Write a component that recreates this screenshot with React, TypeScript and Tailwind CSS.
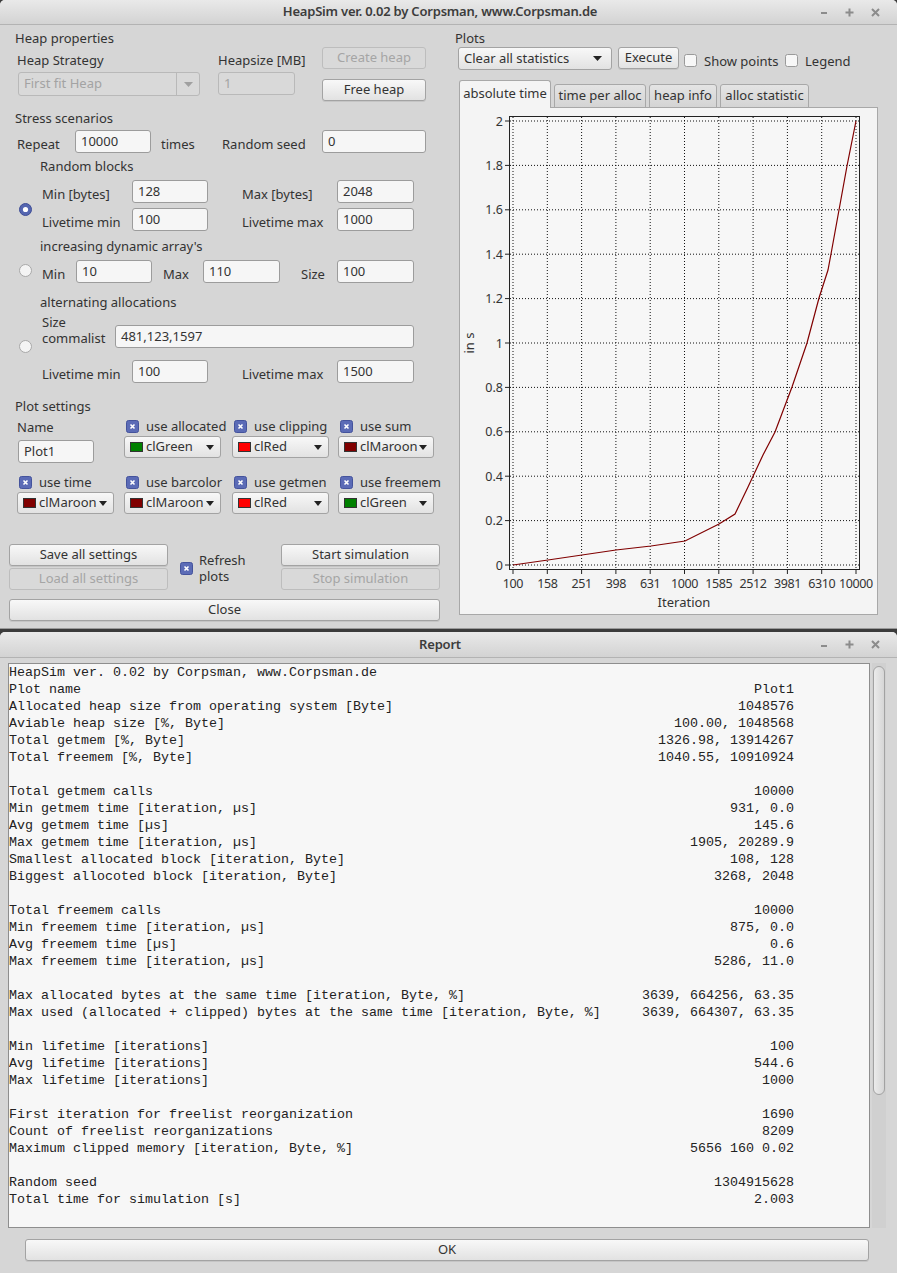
import type { ReactNode } from "react";

const UI = "font-['Noto_Sans',sans-serif]";
const MONO = "font-['Liberation_Mono',monospace]";

const report: [string, string][] = [
  ["HeapSim ver. 0.02 by Corpsman, www.Corpsman.de", ""],
  ["Plot name", "Plot1"],
  ["Allocated heap size from operating system [Byte]", "1048576"],
  ["Aviable heap size [%, Byte]", "100.00, 1048568"],
  ["Total getmem [%, Byte]", "1326.98, 13914267"],
  ["Total freemem [%, Byte]", "1040.55, 10910924"],
  ["", ""],
  ["Total getmem calls", "10000"],
  ["Min getmem time [iteration, µs]", "931, 0.0"],
  ["Avg getmem time [µs]", "145.6"],
  ["Max getmem time [iteration, µs]", "1905, 20289.9"],
  ["Smallest allocated block [iteration, Byte]", "108, 128"],
  ["Biggest allocoted block [iteration, Byte]", "3268, 2048"],
  ["", ""],
  ["Total freemem calls", "10000"],
  ["Min freemem time [iteration, µs]", "875, 0.0"],
  ["Avg freemem time [µs]", "0.6"],
  ["Max freemem time [iteration, µs]", "5286, 11.0"],
  ["", ""],
  ["Max allocated bytes at the same time [iteration, Byte, %]", "3639, 664256, 63.35"],
  ["Max used (allocated + clipped) bytes at the same time [iteration, Byte, %]", "3639, 664307, 63.35"],
  ["", ""],
  ["Min lifetime [iterations]", "100"],
  ["Avg lifetime [iterations]", "544.6"],
  ["Max lifetime [iterations]", "1000"],
  ["", ""],
  ["First iteration for freelist reorganization", "1690"],
  ["Count of freelist reorganizations", "8209"],
  ["Maximum clipped memory [iteration, Byte, %]", "5656 160 0.02"],
  ["", ""],
  ["Random seed", "1304915628"],
  ["Total time for simulation [s]", "2.003"],
];

function Label({ children, className = "" }: { children: ReactNode; className?: string }) {
  return <div className={`h-[16px] shrink-0 whitespace-nowrap leading-[16px] ${className}`}>{children}</div>;
}

function Btn({ w, children, disabled, className = "" }: { w: string; children: ReactNode; disabled?: boolean; className?: string }) {
  return (
    <div
      className={`flex h-[22px] shrink-0 items-center justify-center rounded-[3px] border text-[13px] ${w} ${
        disabled
          ? "border-[#bdbdbd] bg-[#d9d9d9] text-[#a5a5a5]"
          : "border-[#a3a3a3] bg-linear-to-b from-[#f8f8f8] to-[#e2e2e2] text-[#333] shadow-[0_1px_0_rgba(0,0,0,0.08)]"
      } ${className}`}
    >
      {children}
    </div>
  );
}

function Input({ w, value, disabled, className = "" }: { w: string; value: string; disabled?: boolean; className?: string }) {
  return (
    <div
      className={`flex h-[23px] shrink-0 items-center rounded-[3px] border pl-[5px] ${w} ${
        disabled ? "border-[#b9b9b9] bg-[#d9d9d9] text-[#a3a3a3]" : "border-[#9c9c9c] bg-[#f6f6f6] text-[#333]"
      } ${className}`}
    >
      {value}
    </div>
  );
}

function Tri({ color = "#222", w = 9 }: { color?: string; w?: number }) {
  return (
    <svg width={w} height="5" viewBox={`0 0 ${w} 5`} className="shrink-0">
      <polygon points={`0,0 ${w},0 ${w / 2},5`} fill={color} />
    </svg>
  );
}

function Check({ checked }: { checked?: boolean }) {
  return (
    <svg width="13" height="13" viewBox="0 0 13 13" className="shrink-0">
      {checked ? (
        <>
          <rect x="0.5" y="0.5" width="12" height="12" rx="2" fill="#5b6bb6" stroke="#44539c" />
          <path d="M4.5 4.5 L8.5 8.5 M8.5 4.5 L4.5 8.5" stroke="#fff" strokeWidth="1.6" />
        </>
      ) : (
        <rect x="0.5" y="0.5" width="12" height="12" rx="2" fill="#f7f7f7" stroke="#9a9a9a" />
      )}
    </svg>
  );
}

function Radio({ checked }: { checked?: boolean }) {
  return (
    <svg width="13" height="13" viewBox="0 0 13 13" className="shrink-0">
      {checked ? (
        <>
          <circle cx="6.5" cy="6.5" r="6" fill="#5566b0" stroke="#3e4d96" />
          <circle cx="6.5" cy="6.5" r="2.6" fill="#fff" />
        </>
      ) : (
        <circle cx="6.5" cy="6.5" r="6" fill="#f4f4f4" stroke="#a8a8a8" />
      )}
    </svg>
  );
}

function ColorCombo({ w, swatch, label, className = "" }: { w: string; swatch: string; label: string; className?: string }) {
  return (
    <div
      className={`flex h-[22px] shrink-0 items-center rounded-[3px] border border-[#a3a3a3] bg-linear-to-b from-[#f8f8f8] to-[#e2e2e2] pl-[5px] pr-[6px] text-[#333] ${w} ${className}`}
    >
      <span className={`h-[10px] w-[13px] shrink-0 border border-[#333] ${swatch}`} />
      <span className="ml-[3px] min-w-0 flex-1 overflow-hidden whitespace-nowrap">{label}</span>
      <Tri w={8} />
    </div>
  );
}

function CheckLabel({ text, className = "" }: { text: string; className?: string }) {
  return (
    <div className={`flex h-[16px] items-center ${className}`}>
      <Check checked />
      <span className="ml-[7px] whitespace-nowrap leading-[16px]">{text}</span>
    </div>
  );
}

function WinControls() {
  return (
    <div className="flex flex-1 items-center justify-end gap-[17px] pr-[17px]">
      <svg width="8" height="8" viewBox="0 0 8 8">
        <path d="M1 5 H7" stroke="#8c8c8c" strokeWidth="2" />
      </svg>
      <svg width="9" height="9" viewBox="0 0 9 9">
        <path d="M4.5 0.5 V8.5 M0.5 4.5 H8.5" stroke="#8c8c8c" strokeWidth="2" />
      </svg>
      <svg width="9" height="9" viewBox="0 0 9 9">
        <path d="M1 1 L8 8 M8 1 L1 8" stroke="#8c8c8c" strokeWidth="2" />
      </svg>
    </div>
  );
}

function TitleBar({ title, h }: { title: string; h: string }) {
  return (
    <div className={`flex shrink-0 items-center rounded-t-[5px] border-b border-[#b3b3b3] bg-linear-to-b from-[#e9e9e9] to-[#d3d3d3] ${h}`}>
      <div className="flex-1" />
      <span className="text-[13px] font-semibold tracking-[-0.2px] text-[#3c3c3c]">{title}</span>
      <WinControls />
    </div>
  );
}

function FieldRow({ left, leftVal, right, rightVal, className = "" }: { left: string; leftVal: string; right: string; rightVal: string; className?: string }) {
  return (
    <div className={`flex items-start ${className}`}>
      <Label className="mt-[6px] w-[90px]">{left}</Label>
      <Input w="w-[76px]" value={leftVal} />
      <Label className="ml-[34px] mt-[6px] w-[95px]">{right}</Label>
      <Input w="w-[77px]" value={rightVal} />
    </div>
  );
}

function LeftPanel() {
  return (
    <div className="flex w-[450px] shrink-0 flex-col">
      <div className="flex">
        <div className="flex w-[310px] flex-col">
          <Label className="ml-[15px] mt-[5px]">Heap properties</Label>
          <div className="mt-[6px] flex">
            <Label className="ml-[17px] w-[201px]">Heap Strategy</Label>
            <Label>Heapsize [MB]</Label>
          </div>
          <div className="mt-[4px] flex">
            <div className="ml-[18px] flex h-[24px] w-[182px] rounded-[3px] border border-[#b9b9b9] bg-[#d9d9d9] text-[#a3a3a3]">
              <div className="flex flex-1 items-center border-r border-[#b9b9b9] pl-[5px]">First fit Heap</div>
              <div className="flex w-[22px] items-center justify-center">
                <Tri color="#a0a0a0" />
              </div>
            </div>
            <Input w="w-[77px]" value="1" disabled className="ml-[18px]" />
          </div>
        </div>
        <div className="ml-[12px] flex flex-col">
          <Btn w="w-[104px]" disabled className="mt-[22px]">Create heap</Btn>
          <Btn w="w-[104px]" className="mt-[10px]">Free heap</Btn>
        </div>
      </div>

      <Label className="ml-[15px] mt-[9px]">Stress scenarios</Label>
      <div className="mt-[4px] flex items-start">
        <Label className="ml-[17px] mt-[6px] w-[58px]">Repeat</Label>
        <Input w="w-[76px]" value="10000" />
        <Label className="ml-[10px] mt-[6px] w-[61px]">times</Label>
        <Label className="mt-[6px] w-[100px]">Random seed</Label>
        <Input w="w-[104px]" value="0" />
      </div>

      <Label className="ml-[40px] mt-[5px]">Random blocks</Label>
      <div className="mt-[6px] flex items-start">
        <div className="ml-[19px] mt-[23px]">
          <Radio checked />
        </div>
        <div className="ml-[10px] flex flex-col">
          <FieldRow left="Min [bytes]" leftVal="128" right="Max [bytes]" rightVal="2048" />
          <FieldRow left="Livetime min" leftVal="100" right="Livetime max" rightVal="1000" className="mt-[5px]" />
        </div>
      </div>

      <Label className="ml-[40px] mt-[7px]">increasing dynamic array's</Label>
      <div className="mt-[6px] flex items-start">
        <div className="ml-[19px] mt-[4px]">
          <Radio />
        </div>
        <Label className="ml-[10px] mt-[6px] w-[34px]">Min</Label>
        <Input w="w-[76px]" value="10" />
        <Label className="ml-[11px] mt-[6px] w-[40px]">Max</Label>
        <Input w="w-[77px]" value="110" />
        <Label className="ml-[21px] mt-[6px] w-[36px]">Size</Label>
        <Input w="w-[77px]" value="100" />
      </div>

      <Label className="ml-[40px] mt-[11px]">alternating allocations</Label>
      <div className="mt-[4px] flex items-start">
        <div className="ml-[19px] mt-[26px]">
          <Radio />
        </div>
        <div className="ml-[10px] flex flex-col">
          <div className="flex items-start">
            <div className="w-[73px] leading-[16px]">
              Size
              <br />
              commalist
            </div>
            <Input w="w-[299px]" value="481,123,1597" className="mt-[11px]" />
          </div>
          <FieldRow left="Livetime min" leftVal="100" right="Livetime max" rightVal="1500" className="mt-[12px]" />
        </div>
      </div>

      <Label className="ml-[15px] mt-[15px]">Plot settings</Label>
      <div className="flex items-start">
        <div className="ml-[17px] flex w-[107px] shrink-0 flex-col">
          <Label className="mt-[5px]">Name</Label>
          <Input w="w-[76px]" value="Plot1" className="ml-[1px] mt-[5px] h-[22px]" />
        </div>
        <div className="mt-[4px] flex w-[108px] shrink-0 flex-col">
          <CheckLabel text="use allocated" className="ml-[2px]" />
          <ColorCombo w="w-[97px]" swatch="bg-[#008000]" label="clGreen" className="mt-[2px]" />
        </div>
        <div className="mt-[4px] flex w-[106px] shrink-0 flex-col">
          <CheckLabel text="use clipping" className="ml-[2px]" />
          <ColorCombo w="w-[97px]" swatch="bg-[#ff0000]" label="clRed" className="mt-[2px]" />
        </div>
        <div className="mt-[4px] flex w-[100px] shrink-0 flex-col">
          <CheckLabel text="use sum" className="ml-[2px]" />
          <ColorCombo w="w-[96px]" swatch="bg-[#800000]" label="clMaroon" className="mt-[2px]" />
        </div>
      </div>
      <div className="mt-[11px] flex items-start">
        <div className="ml-[17px] flex w-[107px] shrink-0 flex-col">
          <CheckLabel text="use time" className="ml-[2px]" />
          <ColorCombo w="w-[97px]" swatch="bg-[#800000]" label="clMaroon" className="mt-[2px]" />
        </div>
        <div className="flex w-[108px] shrink-0 flex-col">
          <CheckLabel text="use barcolor" className="ml-[2px]" />
          <ColorCombo w="w-[97px]" swatch="bg-[#800000]" label="clMaroon" className="mt-[2px]" />
        </div>
        <div className="flex w-[106px] shrink-0 flex-col">
          <CheckLabel text="use getmen" className="ml-[2px]" />
          <ColorCombo w="w-[97px]" swatch="bg-[#ff0000]" label="clRed" className="mt-[2px]" />
        </div>
        <div className="flex w-[100px] shrink-0 flex-col">
          <CheckLabel text="use freemem" className="ml-[2px]" />
          <ColorCombo w="w-[96px]" swatch="bg-[#008000]" label="clGreen" className="mt-[2px]" />
        </div>
      </div>

      <div className="mt-[30px] flex items-start">
        <div className="ml-[9px] flex flex-col">
          <Btn w="w-[159px]">Save all settings</Btn>
          <Btn w="w-[159px]" disabled className="mt-[2px]">Load all settings</Btn>
        </div>
        <div className="flex w-[113px] items-start">
          <div className="ml-[12px] mt-[18px]">
            <Check checked />
          </div>
          <div className="ml-[6px] mt-[8px] leading-[16px]">
            Refresh
            <br />
            plots
          </div>
        </div>
        <div className="flex flex-col">
          <Btn w="w-[159px]">Start simulation</Btn>
          <Btn w="w-[159px]" disabled className="mt-[2px]">Stop simulation</Btn>
        </div>
      </div>
      <Btn w="w-[431px]" className="ml-[9px] mt-[9px]">Close</Btn>
    </div>
  );
}

const xTicks = ["100", "158", "251", "398", "631", "1000", "1585", "2512", "3981", "6310", "10000"];
const yTicks = ["0", "0.2", "0.4", "0.6", "0.8", "1", "1.2", "1.4", "1.6", "1.8", "2"];
const curve: [number, number][] = [
  [513, 565], [548, 560], [616, 550], [651, 546], [685, 541], [719, 524], [735, 514], [748, 487],
  [763, 455], [775, 432], [792, 387], [807, 343], [819, 298], [828, 270], [831, 254], [839, 210], [847, 166], [856, 121],
];

function Chart() {
  const gx = (i: number) => 513 + i * 34.3;
  const gy = (j: number) => 565 - j * 44.4;
  return (
    <svg width="417" height="506" viewBox="460 108 417 506" className="block">
      <rect x="509.5" y="116.5" width="350" height="453" fill="#f7f7f7" />
      {xTicks.map((_, i) => (
        <line key={`vx${i}`} x1={gx(i)} y1="117" x2={gx(i)} y2="569" stroke="#111" strokeDasharray="1 2" />
      ))}
      {yTicks.map((_, j) => (
        <line key={`hy${j}`} x1="510" y1={gy(j)} x2="859" y2={gy(j)} stroke="#111" strokeDasharray="1 2" />
      ))}
      <rect x="509.5" y="116.5" width="350" height="453" fill="none" stroke="#222" />
      {yTicks.map((t, j) => (
        <g key={`yt${j}`}>
          <line x1="505" y1={gy(j)} x2="509" y2={gy(j)} stroke="#222" />
          <text x="503" y={gy(j) + 4.5} textAnchor="end" fontSize="12.5" fill="#333" fontFamily="Noto Sans, sans-serif">
            {t}
          </text>
        </g>
      ))}
      {xTicks.map((t, i) => (
        <g key={`xt${i}`}>
          <line x1={gx(i)} y1="570" x2={gx(i)} y2="574" stroke="#222" />
          <text
            x={gx(i)}
            y="588"
            textAnchor="middle"
            fontSize="12.5"
            letterSpacing="-0.4"
            fill="#333"
            fontFamily="Noto Sans, sans-serif"
          >
            {t}
          </text>
        </g>
      ))}
      <polyline points={curve.map((p) => p.join(",")).join(" ")} fill="none" stroke="#800000" strokeWidth="1.2" />
      <text x="684" y="607" textAnchor="middle" fontSize="13" fill="#333" fontFamily="Noto Sans, sans-serif">
        Iteration
      </text>
      <text
        x="474"
        y="343"
        textAnchor="middle"
        fontSize="13"
        fill="#333"
        fontFamily="Noto Sans, sans-serif"
        transform="rotate(-90 474 343)"
      >
        in s
      </text>
    </svg>
  );
}

function RightPanel() {
  return (
    <div className="flex flex-1 flex-col">
      <Label className="ml-[5px] mt-[5px]">Plots</Label>
      <div className="mt-[1px] flex items-start">
        <div className="ml-[8px] flex h-[23px] w-[154px] items-center justify-between rounded-[3px] border border-[#a3a3a3] bg-linear-to-b from-[#f8f8f8] to-[#e2e2e2] pl-[5px] pr-[9px] text-[#333]">
          <span>Clear all statistics</span>
          <Tri />
        </div>
        <Btn w="w-[61px]" className="ml-[6px]">Execute</Btn>
        <div className="ml-[5px] mt-[7px]">
          <Check />
        </div>
        <Label className="ml-[7px] mt-[6px] w-[81px]">Show points</Label>
        <div className="mt-[7px]">
          <Check />
        </div>
        <Label className="ml-[7px] mt-[6px]">Legend</Label>
      </div>
      <div className="relative z-10 -mb-px mt-[10px] flex h-[28px] items-end">
        <div className="ml-[9px] flex h-[28px] w-[92px] items-center justify-center rounded-t-[3px] border border-b-0 border-[#a8a8a8] bg-[#f4f4f4] pb-[2px]">
          absolute time
        </div>
        <div className="ml-[3px] flex h-[24px] w-[92px] items-center justify-center rounded-t-[3px] border border-[#a8a8a8] bg-linear-to-b from-[#e4e4e4] to-[#d4d4d4]">
          time per alloc
        </div>
        <div className="ml-[3px] flex h-[24px] w-[68px] items-center justify-center rounded-t-[3px] border border-[#a8a8a8] bg-linear-to-b from-[#e4e4e4] to-[#d4d4d4]">
          heap info
        </div>
        <div className="ml-[3px] flex h-[24px] w-[89px] items-center justify-center rounded-t-[3px] border border-[#a8a8a8] bg-linear-to-b from-[#e4e4e4] to-[#d4d4d4]">
          alloc statistic
        </div>
      </div>
      <div className="ml-[9px] h-[508px] w-[419px] border border-[#a8a8a8] bg-[#f4f4f4]">
        <Chart />
      </div>
    </div>
  );
}

function ReportWindow() {
  return (
    <div className={`mt-[3px] flex flex-1 flex-col rounded-t-[5px] bg-[#d6d6d6] ${UI} text-[13px] text-[#333]`}>
      <TitleBar title="Report" h="h-[26px]" />
      <div className="mt-[5px] flex">
        <div className={`ml-[8px] h-[565px] w-[862px] overflow-hidden border border-[#8e8e8e] bg-[#f7f7f7] ${MONO} text-[13.33px] leading-[17px] text-[#222]`}>
          {report.map(([l, v], i) => (
            <div key={i} className="flex h-[17px] w-[785px] justify-between whitespace-pre">
              <span>{l}</span>
              <span>{v}</span>
            </div>
          ))}
        </div>
        <div className="ml-[2px] h-[565px] w-[14px] bg-[#d0d0d0] pt-[3px]">
          <div className="mx-auto h-[429px] w-[12px] rounded-[6px] border border-[#a2a2a2] bg-linear-to-r from-[#ebebeb] to-[#d6d6d6]" />
        </div>
      </div>
      <Btn w="w-[844px]" className="ml-[25px] mt-[11px]">OK</Btn>
    </div>
  );
}

export default function App() {
  return (
    <div className="flex h-[1273px] w-[897px] flex-col overflow-hidden bg-[#3b3b3b]">
      <div className={`flex h-[629px] shrink-0 flex-col rounded-t-[5px] border-b border-[#9a9a9a] bg-[#d6d6d6] ${UI} text-[13px] text-[#333]`}>
        <TitleBar title="HeapSim ver. 0.02 by Corpsman, www.Corpsman.de" h="h-[25px]" />
        <div className="flex flex-1">
          <LeftPanel />
          <RightPanel />
        </div>
      </div>
      <ReportWindow />
    </div>
  );
}
